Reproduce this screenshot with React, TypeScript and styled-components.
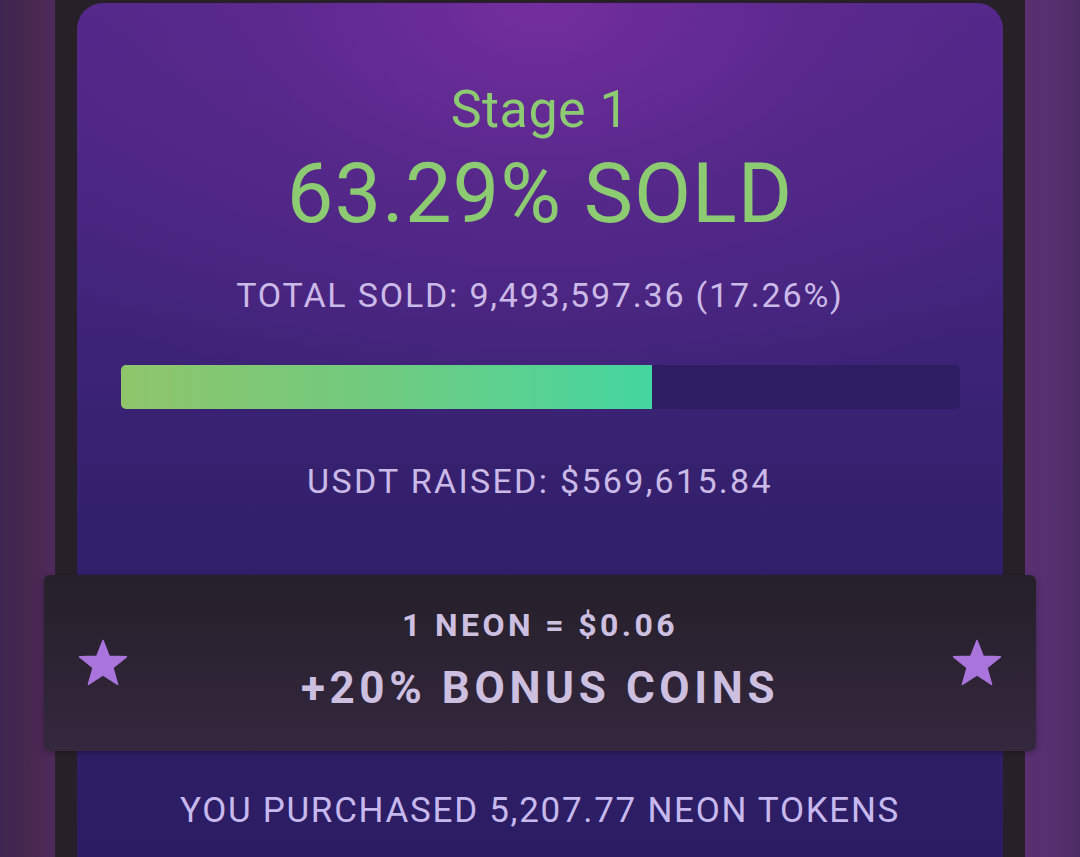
import styled, {createGlobalStyle} from "styled-components";

const GlobalStyle = createGlobalStyle`
    html, body {
        margin: 0;
        padding: 0;
        background: #272029;
        overflow: hidden;
    }
    body {
        font-family: Roboto, "Liberation Sans", sans-serif;
    }
`;

const StyledPage = styled.div`
    display: flex;
    width: 1080px;
    height: 857px;
    overflow: hidden;
`;

const StyledSideStrip = styled.div<{ $side: 'left' | 'right' }>`
    width: 55px;
    flex-shrink: 0;
    background: ${props => (props.$side === 'left'
        ? 'linear-gradient(90deg, #3d2650 0%, #46284f 50%, #4e2a5c 100%)'
        : 'linear-gradient(90deg, #5a2f72 0%, #54306d 60%, #4c2b63 100%)')};
`;

const StyledFrame = styled.div`
    flex: 1;
    background: #272029;
    padding: 3px 22px 0;
    display: flex;
    flex-direction: column;
`;

const StyledCard = styled.div`
    flex: 1;
    border-radius: 26px 26px 0 0;
    background:
        radial-gradient(ellipse 70% 50% at 50% 0%, rgba(118, 46, 160, 0.95) 0%, rgba(96, 42, 145, 0.6) 45%, rgba(80, 38, 130, 0) 100%),
        linear-gradient(180deg, #4f2787 0%, #40247a 35%, #33206c 60%, #2b1d64 100%);
    padding-top: 81px;
    display: flex;
    flex-direction: column;
    align-items: center;
`;

const StyledStage = styled.div`
    font-size: 52px;
    line-height: 52px;
    color: #8dcb72;
    letter-spacing: 0.5px;
`;

const StyledSold = styled.div`
    margin-top: 16px;
    font-size: 83px;
    line-height: 83px;
    color: #8dcb72;
    letter-spacing: 1px;
`;

const StyledInfo = styled.div<{ $gap: number, $spacing: number }>`
    margin-top: ${props => props.$gap}px;
    font-size: 34px;
    line-height: 34px;
    color: #cbb9e8;
    letter-spacing: ${props => props.$spacing}px;
    white-space: nowrap;
`;

const StyledBarTrack = styled.div`
    margin-top: 53px;
    align-self: stretch;
    margin-left: 44px;
    margin-right: 43px;
    height: 44px;
    background: #2e1d63;
    border-radius: 5px;
    overflow: hidden;
`;

const StyledBarFill = styled.div`
    height: 100%;
    background: linear-gradient(90deg, #8fc56a 0%, #6fcb80 50%, #44d6a0 100%);
`;

const StyledBanner = styled.div`
    position: relative;
    z-index: 1;
    margin-top: 77px;
    align-self: stretch;
    margin-left: -33px;
    margin-right: -33px;
    height: 176px;
    box-sizing: border-box;
    border-radius: 6px;
    background: linear-gradient(180deg, #252029 0%, #2c2333 50%, #34283f 100%);
    box-shadow: 0 2px 6px rgba(0, 0, 0, 0.25);
    display: grid;
    grid-template-columns: 50px 1fr 50px;
    align-items: center;
    padding: 0 34px;
`;

const StyledBannerText = styled.div`
    display: flex;
    flex-direction: column;
    align-items: center;
    color: #cdbfe0;
    font-weight: 700;
    padding-bottom: 8px;
`;

const StyledPrice = styled.div`
    font-size: 32px;
    line-height: 32px;
    letter-spacing: 3.4px;
`;

const StyledBonus = styled.div`
    margin-top: 25px;
    font-size: 44px;
    line-height: 44px;
    letter-spacing: 4.6px;
`;

const StyledPurchased = styled.div`
    margin-top: 42px;
    font-size: 35px;
    line-height: 35px;
    color: #c7b9ee;
    letter-spacing: 1.7px;
    white-space: nowrap;
`;

function Star() {
    return (
        <svg width="50" height="48" viewBox="0 0 50 48">
            <path
                d="M25 1.5 L31.2 17.2 L48.4 17.8 L34.9 28.6 L39.6 45.4 L25 35.8 L10.4 45.4 L15.1 28.6 L1.6 17.8 L18.8 17.2 Z"
                fill="#a975dc"
                stroke="#a975dc"
                strokeWidth="1.5"
                strokeLinejoin="round"
            />
        </svg>
    );
}

const stage = {
    name: 'Stage 1',
    soldPercent: 63.29,
    totalSold: '9,493,597.36',
    totalPercent: '17.26%',
    usdtRaised: '$569,615.84',
    price: '$0.06',
    bonus: '+20% BONUS COINS',
    purchased: '5,207.77'
};

export default function App() {
    return (
        <>
            <GlobalStyle/>
            <StyledPage>
                <StyledSideStrip $side="left"/>
                <StyledFrame>
                    <StyledCard>
                        <StyledStage>{stage.name}</StyledStage>
                        <StyledSold>{stage.soldPercent}% SOLD</StyledSold>
                        <StyledInfo $gap={43} $spacing={1.8}>
                            TOTAL SOLD: {stage.totalSold} ({stage.totalPercent})
                        </StyledInfo>
                        <StyledBarTrack>
                            <StyledBarFill style={{width: `${stage.soldPercent}%`}}/>
                        </StyledBarTrack>
                        <StyledInfo $gap={55} $spacing={2.3}>USDT RAISED: {stage.usdtRaised}</StyledInfo>
                        <StyledBanner>
                            <Star/>
                            <StyledBannerText>
                                <StyledPrice>1 NEON = {stage.price}</StyledPrice>
                                <StyledBonus>{stage.bonus}</StyledBonus>
                            </StyledBannerText>
                            <Star/>
                        </StyledBanner>
                        <StyledPurchased>YOU PURCHASED {stage.purchased} NEON TOKENS</StyledPurchased>
                    </StyledCard>
                </StyledFrame>
                <StyledSideStrip $side="right"/>
            </StyledPage>
        </>
    );
}
